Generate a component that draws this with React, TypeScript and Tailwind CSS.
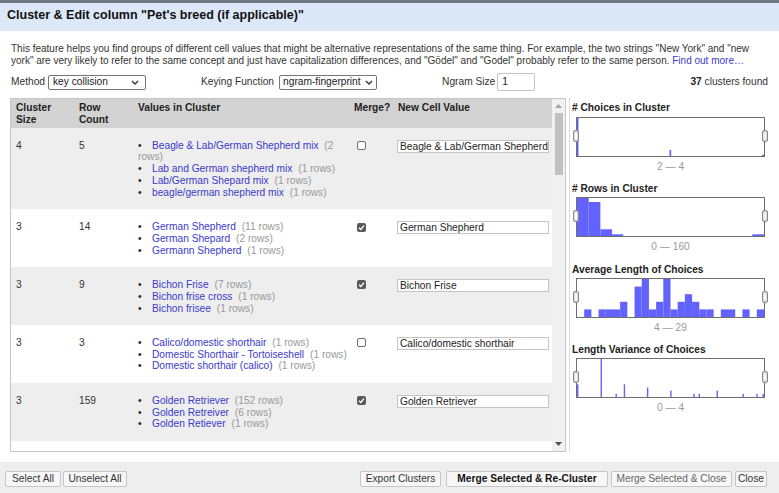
import React from "react";

type Cluster = {
  size: number;
  rows: number;
  values: [string, number][];
  merge: boolean;
  newValue: string;
};

const clusters: Cluster[] = [
  {
    size: 4,
    rows: 5,
    values: [
      ["Beagle & Lab/German Shepherd mix", 2],
      ["Lab and German shepherd mix", 1],
      ["Lab/German Shepard mix", 1],
      ["beagle/german shepherd mix", 1],
    ],
    merge: false,
    newValue: "Beagle & Lab/German Shepherd mix",
  },
  {
    size: 3,
    rows: 14,
    values: [
      ["German Shepherd", 11],
      ["German Shepard", 2],
      ["Germann Shepherd", 1],
    ],
    merge: true,
    newValue: "German Shepherd",
  },
  {
    size: 3,
    rows: 9,
    values: [
      ["Bichon Frise", 7],
      ["Bichon frise cross", 1],
      ["Bichon frisee", 1],
    ],
    merge: true,
    newValue: "Bichon Frise",
  },
  {
    size: 3,
    rows: 3,
    values: [
      ["Calico/domestic shorthair", 1],
      ["Domestic Shorthair - Tortoiseshell", 1],
      ["Domestic shorthair (calico)", 1],
    ],
    merge: false,
    newValue: "Calico/domestic shorthair",
  },
  {
    size: 3,
    rows: 159,
    values: [
      ["Golden Retriever", 152],
      ["Golden Retreiver", 6],
      ["Golden Retiever", 1],
    ],
    merge: true,
    newValue: "Golden Retriever",
  },
];

// bars: [x, width, height] inside a 188x38 plot
type Bar = [number, number, number];

const avgBins: [number, number][] = [
  [1, 1], [3, 1], [4, 1], [5, 1], [6, 2], [8, 4], [9, 5], [10, 1], [11, 2], [12, 5],
  [13, 1], [14, 2], [15, 3], [16, 2], [17, 1], [18, 1], [20, 1], [21, 1], [23, 1], [25, 1],
];

const varBins: [number, number][] = [
  [0, 4], [23.7, 12], [38.7, 1], [47, 4], [70.3, 3], [93.7, 2], [117, 1], [122.3, 1],
  [140.3, 2], [166.3, 1], [180.3, 1], [186.5, 1],
];

const histograms: { title: string; range: string; bars: Bar[] }[] = [
  {
    title: "# Choices in Cluster",
    range: "2 — 4",
    bars: [
      [0, 1.5, 38],
      [93, 1.7, 6],
      [186, 2, 1.2],
    ],
  },
  {
    title: "# Rows in Cluster",
    range: "0 — 160",
    bars: [
      [0, 11.75, 38],
      [11.75, 11.75, 34],
      [23.5, 11.75, 6.7],
      [35.25, 11.25, 1.7],
      [176.25, 11.75, 1.7],
    ],
  },
  {
    title: "Average Length of Choices",
    range: "4 — 29",
    bars: avgBins.map(([b, n]) => [(b * 188) / 26, 188 / 26, n * 7.6] as Bar),
  },
  {
    title: "Length Variance of Choices",
    range: "0 — 4",
    bars: varBins.map(([x, n]) => [x, 1.4, n * 3.17] as Bar),
  },
];

const Chevron = () => (
  <svg width="8" height="5" viewBox="0 0 8 5">
    <path d="M1 1 4 4 7 1" fill="none" stroke="#333" strokeWidth="1.4" />
  </svg>
);

const Check = ({ checked }: { checked: boolean }) =>
  checked ? (
    <span className="mt-[1.5px] ml-[4px] flex h-[9px] w-[9px] items-center justify-center rounded-[2px] bg-[#5a5a5a]">
      <svg width="7" height="7" viewBox="0 0 7 7">
        <path d="M1 3.7 2.8 5.4 6 1.6" fill="none" stroke="#fff" strokeWidth="1.4" />
      </svg>
    </span>
  ) : (
    <span className="mt-[1.5px] ml-[4px] block h-[9px] w-[9px] rounded-[2px] border border-[#6e6e6e] bg-white" />
  );

const Handle = ({ side }: { side: "left" | "right" }) => (
  <div
    className={`absolute top-[12px] h-[12px] w-[6px] rounded-[2px] border border-[#8a8a8a] bg-[#dadada] ${
      side === "left" ? "left-[-4px]" : "right-[-4px]"
    }`}
  >
    <div className="mx-auto mt-[2px] h-[6px] w-[2px] bg-white" />
  </div>
);

const Btn = ({ className, children }: { className: string; children: React.ReactNode }) => (
  <button
    type="button"
    className={`flex h-[16px] items-center justify-center rounded-[2px] border border-[#c6c6c6] bg-[#f7f7f7] text-[10.2px] leading-[14px] ${className}`}
  >
    {children}
  </button>
);

export default function App() {
  return (
    <div className="relative h-[493px] w-[779px] overflow-hidden bg-white font-['Liberation_Sans',Arial,sans-serif] text-[10.2px] leading-[11.8px] text-[#333]">
      <div className="h-[3px] bg-[#6c7581]" />

      {/* Title */}
      <div className="h-[28px] bg-[#dce8f8] px-[7px] pt-[5px] text-[12.5px] font-bold leading-[15px] text-[#111]">
        Cluster &amp; Edit column "Pet's breed (if applicable)"
      </div>

      {/* Description */}
      <p className="mt-[12px] whitespace-nowrap px-[11px] text-[10px] leading-[12px]">
        This feature helps you find groups of different cell values that might be alternative representations of
        the same thing. For example, the two strings "New York" and "new
        <br />
        york" are very likely to refer to the same concept and just have capitalization differences, and "Gödel" and
        "Godel" probably refer to the same person.{" "}
        <span className="text-[#3a3acb]">Find out more…</span>
      </p>

      {/* Controls */}
      <div className="mt-[6px] flex h-[18px] items-center pr-[11px] pl-[11px]">
        <span>Method</span>
        <div className="ml-[3px] flex h-[15px] w-[98px] items-center justify-between rounded-[2px] border border-[#767676] bg-white pr-[6px] pl-[4px] text-[#222]">
          <span>key collision</span>
          <Chevron />
        </div>
        <span className="ml-[55px]">Keying Function</span>
        <div className="ml-[5px] flex h-[15px] w-[98px] items-center justify-between rounded-[2px] border border-[#767676] bg-white pr-[3px] pl-[3px] text-[#222]">
          <span>ngram-fingerprint</span>
          <Chevron />
        </div>
        <span className="ml-[65px]">Ngram Size</span>
        <div className="ml-[2px] flex h-[18px] w-[38px] items-center rounded-[2px] border border-[#c4c4c4] bg-white pl-[4px] text-[#222]">
          1
        </div>
        <span className="ml-auto">
          <b className="text-[#222]">37</b> clusters found
        </span>
      </div>

      {/* Main */}
      <div className="mt-[7px] flex h-[354px]">
        <div className="ml-[10px] flex w-[556px] border border-[#c6c6c6]">
          <div className="w-[541px] overflow-hidden">
            <table className="w-[541px] table-fixed border-collapse">
              <colgroup>
                <col className="w-[63px]" />
                <col className="w-[59px]" />
                <col className="w-[220px]" />
                <col className="w-[40px]" />
                <col className="w-[159px]" />
              </colgroup>
              <thead>
                <tr className="bg-[#d2d2d2] text-left align-top font-bold text-[#222]">
                  <th className="pt-[3px] pb-[2px] pl-[5px]">
                    Cluster
                    <br />
                    Size
                  </th>
                  <th className="pt-[3px] pb-[2px] pl-[5px]">
                    Row
                    <br />
                    Count
                  </th>
                  <th className="pt-[3px] pb-[2px] pl-[5px]">Values in Cluster</th>
                  <th className="pt-[3px] pb-[2px] pl-[1px]">Merge?</th>
                  <th className="pt-[3px] pb-[2px] pl-[5px]">New Cell Value</th>
                </tr>
              </thead>
              <tbody>
                {clusters.map((c, i) => (
                  <tr key={i} className={`align-top ${i % 2 === 0 ? "bg-[#eeeeee]" : "bg-white"}`}>
                    <td className="pt-[12px] pb-[10.5px] pl-[5px]">{c.size}</td>
                    <td className="pt-[12px] pb-[10.5px] pl-[5px]">{c.rows}</td>
                    <td className="pt-[12px] pr-[1px] pb-[10.5px] pl-[5px]">
                      <ul>
                        {c.values.map(([v, n], j) => (
                          <li key={j}>
                            <span className="inline-block w-[14px] text-[#222]">•</span>
                            <span className="text-[#3a3acb]">{v}</span>{" "}
                            <span className="ml-[3px] text-[#999]">({n} rows)</span>
                          </li>
                        ))}
                      </ul>
                    </td>
                    <td className="pt-[12px] pb-[10.5px]">
                      <Check checked={c.merge} />
                    </td>
                    <td className="pt-[12px] pb-[10.5px] pl-[4px]">
                      <input
                        readOnly
                        value={c.newValue}
                        className="block h-[13px] w-[152px] border border-[#c4c4c4] bg-white pr-0 pl-[2px] text-[10.2px] leading-[11px] text-[#222] outline-none"
                      />
                    </td>
                  </tr>
                ))}
              </tbody>
            </table>
          </div>

          {/* Scrollbar */}
          <div className="flex w-[13px] flex-col bg-[#f1f1f1]">
            <div className="flex h-[14px] items-center justify-center">
              <svg width="7" height="4" viewBox="0 0 7 4">
                <path d="M0 4 3.5 0 7 4Z" fill="#a3a3a3" />
              </svg>
            </div>
            <div className="ml-[3px] h-[62px] w-[8px] bg-[#c1c1c1]" />
            <div className="flex-1" />
            <div className="flex h-[15px] items-center justify-center">
              <svg width="7" height="4" viewBox="0 0 7 4">
                <path d="M0 0 3.5 4 7 0Z" fill="#505050" />
              </svg>
            </div>
          </div>
        </div>

        {/* Facets */}
        <div className="ml-[3px] flex-1 border-l border-[#dcdcdc] pt-[4.4px] pl-[2px]">
          {histograms.map((h) => (
            <div key={h.title} className="mb-[10.5px]">
              <div className="font-bold text-[#222]">{h.title}</div>
              <div className="relative mt-[2.5px] ml-[4px] h-[40px] w-[189px] border border-[#6e6e6e] bg-white">
                <svg width="187" height="38" viewBox="0 0 188 38" preserveAspectRatio="none" className="block">
                  {h.bars.map(([x, w, ht], k) => (
                    <rect key={k} x={x} y={38 - ht} width={w} height={ht} fill="#6262ff" />
                  ))}
                </svg>
                <Handle side="left" />
                <Handle side="right" />
              </div>
              <div className="mt-[4px] ml-[4px] w-[189px] text-center text-[#9a9a9a]">{h.range}</div>
            </div>
          ))}
        </div>
      </div>

      {/* Footer */}
      <div className="mt-[10px] flex h-[31px] items-start bg-[#eeeeee] pt-[9px] pr-[12px] pl-[5px] text-[#333]">
        <Btn className="w-[56px]">Select All</Btn>
        <Btn className="ml-[2px] w-[64px]">Unselect All</Btn>
        <Btn className="ml-auto w-[81px]">Export Clusters</Btn>
        <Btn className="ml-[5px] w-[162px] font-bold text-[#111]">Merge Selected &amp; Re-Cluster</Btn>
        <Btn className="ml-[3px] w-[121px] text-[#666]">Merge Selected &amp; Close</Btn>
        <Btn className="ml-[3px] w-[32px]">Close</Btn>
      </div>
    </div>
  );
}
